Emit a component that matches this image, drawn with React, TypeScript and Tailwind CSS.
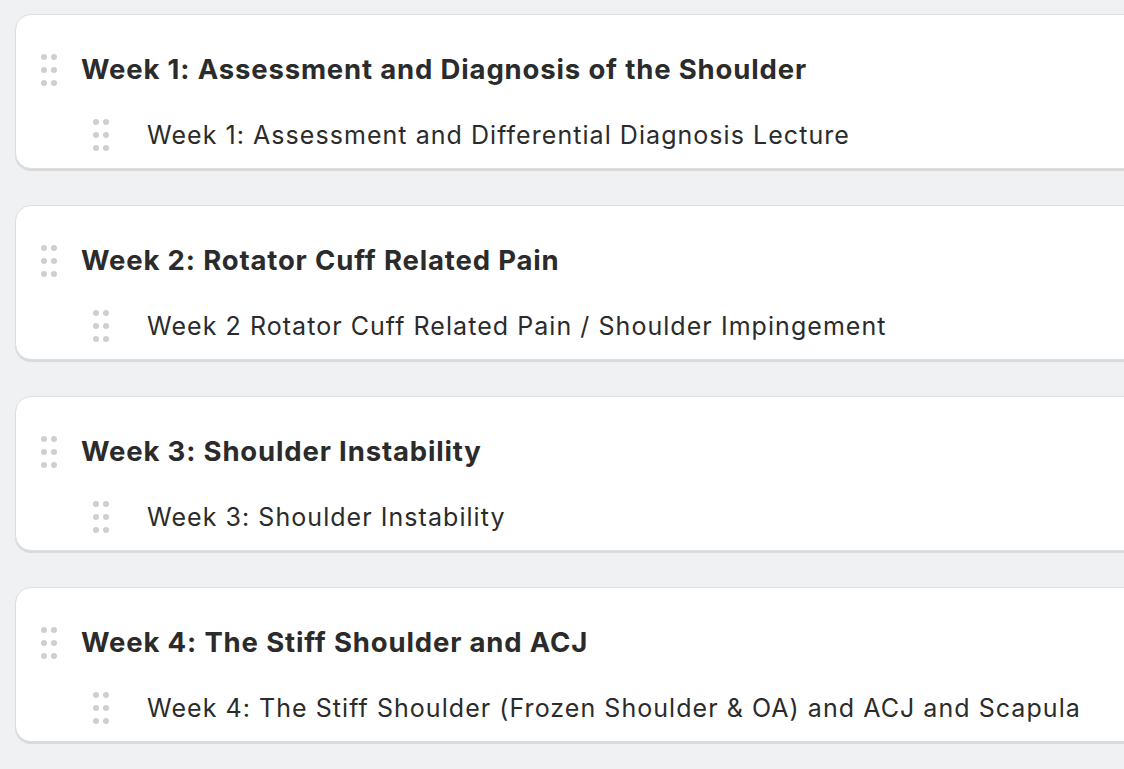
const weeks = [
  {
    title: "Week 1: Assessment and Diagnosis of the Shoulder",
    lesson: "Week 1: Assessment and Differential Diagnosis Lecture",
  },
  {
    title: "Week 2: Rotator Cuff Related Pain",
    lesson: "Week 2 Rotator Cuff Related Pain / Shoulder Impingement",
  },
  {
    title: "Week 3: Shoulder Instability",
    lesson: "Week 3: Shoulder Instability",
  },
  {
    title: "Week 4: The Stiff Shoulder and ACJ",
    lesson: "Week 4: The Stiff Shoulder (Frozen Shoulder & OA) and ACJ and Scapula",
  },
]

const Handle = () => (
  <div className="grid grid-cols-2 gap-x-[4px] gap-y-[7px] w-[16px] shrink-0">
    {[0, 1, 2, 3, 4, 5].map((i) => (
      <span key={i} className="block w-[6px] h-[6px] rounded-full bg-[#cfcfcf]" />
    ))}
  </div>
)

const App = () => {
  return (
    <div
      className="w-[1124px] h-[769px] overflow-hidden bg-[#f0f1f3] pt-[14px] pl-[15px]"
      style={{ fontFamily: "Inter, 'Noto Sans', sans-serif" }}
    >
      <div className="flex flex-col gap-[36px] mr-[-40px]">
        {weeks.map((w) => (
          <div
            key={w.title}
            className="h-[155px] bg-white border border-[#dedede] rounded-l-[16px] shadow-[0_2px_1px_rgba(0,0,0,0.1)] pl-[25px] pt-[38px]"
          >
            <div className="flex items-center gap-[24px] h-[34px]">
              <Handle />
              <h2 className="text-[27.5px] font-bold text-[#2b2b2b] tracking-[0.84px] leading-none whitespace-nowrap">
                {w.title}
              </h2>
            </div>
            <div className="flex items-center gap-[38px] h-[34px] mt-[31px] pl-[52px]">
              <Handle />
              <p className="text-[25px] text-[#2b2b2b] tracking-[1.05px] leading-none whitespace-nowrap">
                {w.lesson}
              </p>
            </div>
          </div>
        ))}
      </div>
    </div>
  )
}

export default App
